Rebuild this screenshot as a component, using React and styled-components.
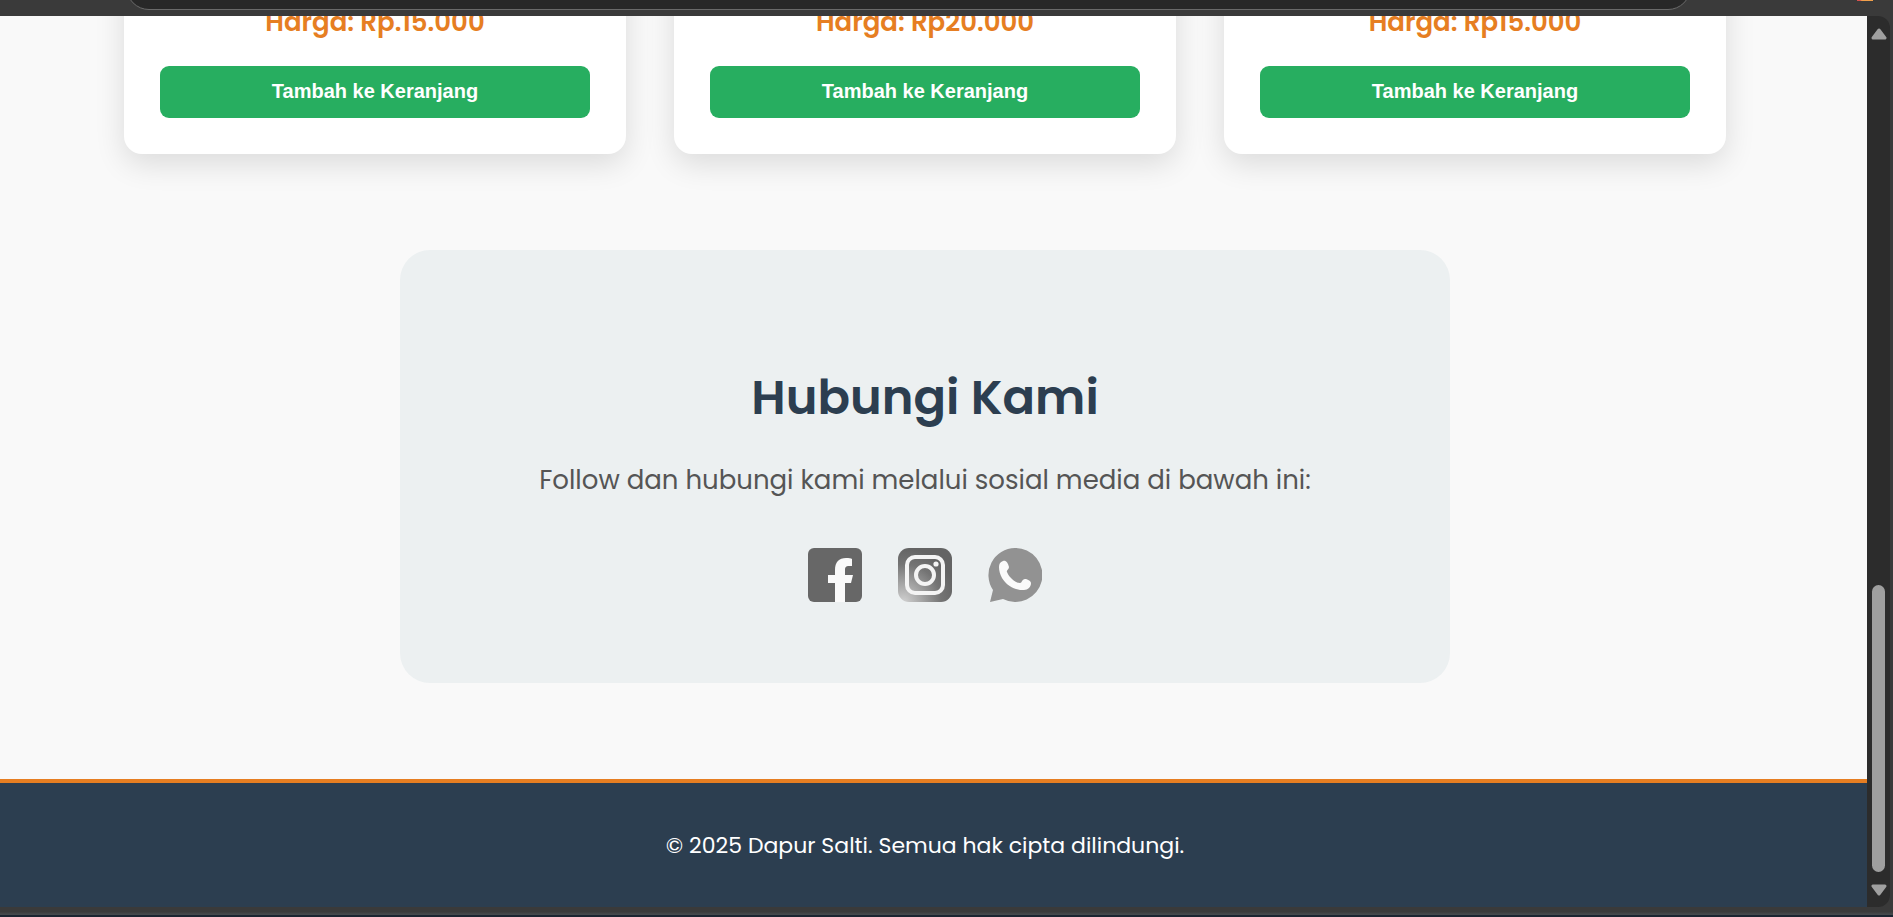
import React from "react";
import styled, { createGlobalStyle } from "styled-components";

const GlobalStyle = createGlobalStyle`
  * { box-sizing: border-box; }
  body {
    margin: 0;
    background: #3a3a3a;
    font-family: Poppins, Inter, "Liberation Sans", sans-serif;
  }
  h2, p { margin: 0; }
`;

const Browser = styled.div`
  display: flex;
  flex-direction: column;
  min-height: 100vh;
`;

const Toolbar = styled.div`
  position: relative;
  height: 16px;
  overflow: hidden;
  background: #3a3a3a;
  padding: 0 202px 0 126px;
`;

const AddressField = styled.div`
  height: 46px;
  margin-top: -36px;
  border: 1px solid #6a6a6a;
  border-radius: 23px;
  background: #282828;
`;

const ProfileBadge = styled.span`
  position: absolute;
  top: 0;
  right: 20px;
  width: 16px;
  height: 1px;
  background: linear-gradient(90deg, #d9534f 20%, #f0a04b 30%);
`;

const Viewport = styled.div`
  display: flex;
  flex: 1;
  overflow: hidden;
  border-top-right-radius: 12px;
  border-bottom-right-radius: 12px;
  margin-right: 3px;
`;

const Page = styled.div`
  flex: 1;
  min-width: 0;
  display: flex;
  flex-direction: column;
  background: #f9f9f9;
`;

const Main = styled.main`
  flex: 1;
  padding: 0 141px 96px 124px;
`;

const Products = styled.section`
  display: grid;
  grid-template-columns: repeat(3, 1fr);
  gap: 48px;
  margin-top: -50px;
`;

const Card = styled.article`
  padding: 36px;
  border-radius: 18px;
  background: #fff;
  box-shadow: 0 10px 30px rgba(0, 0, 0, 0.12);
  text-align: center;
`;

const Price = styled.p`
  margin-bottom: 24px;
  color: #e67e22;
  font-size: 26px;
  font-weight: 600;
  line-height: 40px;
`;

const AddButton = styled.button`
  display: block;
  width: 100%;
  height: 52px;
  padding: 0 0 2px;
  border: 0;
  border-radius: 9px;
  background: #27ae60;
  color: #fff;
  font: bold 20px "Liberation Sans", Arial, sans-serif;
  cursor: pointer;
`;

const Contact = styled.section`
  max-width: 1050px;
  margin: 96px auto 0;
  padding: 112px 48px 81px;
  border-radius: 30px;
  background: #ecf0f1;
  text-align: center;
`;

const Title = styled.h2`
  color: #2c3e50;
  font-size: 48px;
  font-weight: 600;
  line-height: 72px;
`;

const Lead = styled.p`
  margin-top: 24px;
  color: #555;
  font-size: 26px;
  line-height: 44px;
`;

const Socials = styled.nav`
  display: flex;
  justify-content: center;
  gap: 36px;
  margin-top: 46px;
`;

const SocialLink = styled.a`
  display: block;
  width: 54px;
  height: 54px;

  svg {
    display: block;
    width: 100%;
    height: 100%;
  }

  g {
    filter: blur(0.6px);
  }
`;

const Footer = styled.footer`
  padding: 45px 17px 43px 0;
  border-top: 4px solid #e67e22;
  background: #2c3e50;
  color: #fff;
  font-size: 22px;
  line-height: 36px;
  text-align: center;
`;

const Scrollbar = styled.div`
  display: flex;
  flex-direction: column;
  align-items: center;
  width: 23px;
  padding: 12px 0 11px;
  background: #2c2c2c;
`;

const Arrow = styled.svg`
  width: 16px;
  height: 12px;
  transform: ${(p) => (p.$down ? "rotate(180deg)" : "none")};
`;

const Track = styled.div`
  display: flex;
  flex: 1;
  flex-direction: column;
  width: 13px;
  padding: 12px 0;
`;

const Space = styled.div`
  flex: 65;
`;

const Thumb = styled.div`
  flex: 35;
  border-radius: 7px;
  background: #9f9f9f;
`;

const BottomEdge = styled.div`
  height: 10px;
  border-bottom: 2px solid #1b2430;
  background: linear-gradient(#3a3a3a 60%, #45494c 90%);
`;

const Facebook = () => (
  <svg viewBox="0 0 54 54" aria-hidden="true">
    <rect width="54" height="54" rx="6" fill="#676767" />
    <g>
      <path
        d="M27 54V35h-7v-8h7v-5c0-8 4-12 11-12 3 0 5 0 6 1v7h-3c-3 0-4 1-4 4v5h8l-2 8h-6v19z"
        fill="#fafafa"
      />
    </g>
  </svg>
);

const Instagram = () => (
  <svg viewBox="0 0 54 54" aria-hidden="true">
    <defs>
      <radialGradient id="insta" cx="0.1" cy="1" r="1">
        <stop offset="0" stopColor="#d0d0d0" />
        <stop offset="0.35" stopColor="#a4a4a4" />
        <stop offset="0.7" stopColor="#747474" />
        <stop offset="1" stopColor="#646464" />
      </radialGradient>
    </defs>
    <rect width="54" height="54" rx="11" fill="url(#insta)" />
    <g fill="none" stroke="#f4f4f4" strokeWidth="4">
      <rect x="9" y="9" width="36" height="36" rx="8" />
      <circle cx="27" cy="27" r="9" />
      <circle cx="38" cy="16" r="1.3" strokeWidth="2.6" />
    </g>
  </svg>
);

const WhatsApp = () => (
  <svg viewBox="0 0 54 54" aria-hidden="true">
    <path d="M27 0a27 27 0 1 1-12 51L2 54l3-12A27 27 0 0 1 27 0z" fill="#929292" />
    <g>
      <path
        d="M15 13c3-1 5 2 6 6 0 3-3 3-2 5 1 3 3 5 5 7s5 4 8 4c2 0 2-4 5-4 2 0 6 2 6 4 0 4-3 7-7 7-3 0-5 0-8-1-6-2-11-6-14-11-2-4-3-7-3-11 0-3 1-5 4-6z"
        fill="#fafafa"
      />
    </g>
  </svg>
);

const prices = ["Harga: Rp.15.000", "Harga: Rp20.000", "Harga: Rp15.000"];

const socials = [
  { name: "Facebook", Icon: Facebook },
  { name: "Instagram", Icon: Instagram },
  { name: "WhatsApp", Icon: WhatsApp },
];

const ArrowShape = () => (
  <path
    d="M8 2 14 10H2z"
    fill="#a0a0a0"
    stroke="#a0a0a0"
    strokeWidth="3"
    strokeLinejoin="round"
  />
);

export default function App() {
  return (
    <Browser>
      <GlobalStyle />
      <Toolbar>
        <AddressField />
        <ProfileBadge />
      </Toolbar>
      <Viewport>
        <Page>
          <Main>
            <Products>
              {prices.map((price) => (
                <Card key={price}>
                  <Price>{price}</Price>
                  <AddButton type="button">Tambah ke Keranjang</AddButton>
                </Card>
              ))}
            </Products>
            <Contact>
              <Title>Hubungi Kami</Title>
              <Lead>Follow dan hubungi kami melalui sosial media di bawah ini:</Lead>
              <Socials>
                {socials.map(({ name, Icon }) => (
                  <SocialLink key={name} href="#" aria-label={name}>
                    <Icon />
                  </SocialLink>
                ))}
              </Socials>
            </Contact>
          </Main>
          <Footer>
            <p>© 2025 Dapur Salti. Semua hak cipta dilindungi.</p>
          </Footer>
        </Page>
        <Scrollbar aria-hidden="true">
          <Arrow viewBox="0 0 16 12">
            <ArrowShape />
          </Arrow>
          <Track>
            <Space />
            <Thumb />
          </Track>
          <Arrow $down viewBox="0 0 16 12">
            <ArrowShape />
          </Arrow>
        </Scrollbar>
      </Viewport>
      <BottomEdge />
    </Browser>
  );
}
